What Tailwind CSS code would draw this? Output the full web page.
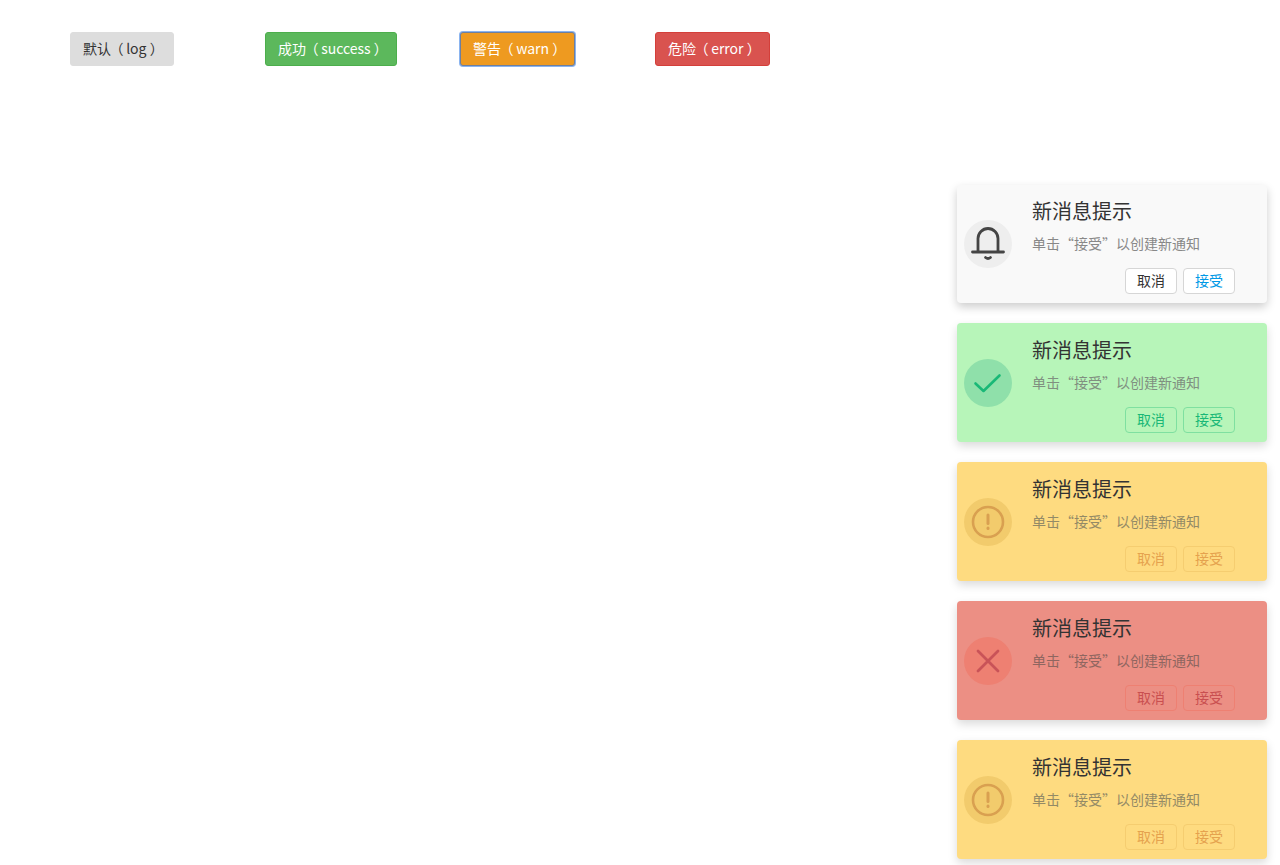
<!DOCTYPE html>
<html lang="zh-CN">
<head>
  <meta charset="UTF-8" />
  <title>Notice</title>
  <script src="https://cdn.jsdelivr.net/npm/@tailwindcss/browser@4"></script>
</head>
<body class="bg-white h-[865px] overflow-hidden relative font-['Noto_Sans_CJK_SC','Noto_Sans',sans-serif]">
  <!-- Trigger buttons -->
  <div class="grid grid-cols-[repeat(4,195px)] justify-start items-start pl-[70px] pt-[32px]">
    <div><button class="h-[34px] w-[104px] pl-[12px] pb-[2px] text-left rounded-[3px] bg-[#dddddd] border border-[#dddddd] text-[14px] text-[#333333] whitespace-nowrap">默认<span class="ml-[5px] [font-feature-settings:'palt']">（</span> log ）</button></div>
    <div><button class="h-[34px] w-[132px] pl-[12px] pb-[2px] text-left rounded-[3px] bg-[#5cb85c] border border-[#4cae4c] text-[14px] text-white whitespace-nowrap">成功<span class="ml-[5px] [font-feature-settings:'palt']">（</span> success ）</button></div>
    <div><button class="h-[34px] w-[115px] pl-[12px] pb-[2px] text-left rounded-[3px] bg-[#ee9a20] border border-[#6d7f9f] ring-1 ring-[#8ab4f0] text-[14px] text-white whitespace-nowrap">警告<span class="ml-[5px] [font-feature-settings:'palt']">（</span> warn ）</button></div>
    <div><button class="h-[34px] w-[115px] pl-[12px] pb-[2px] text-left rounded-[3px] bg-[#d9534f] border border-[#d43f3a] text-[14px] text-white whitespace-nowrap">危险<span class="ml-[5px] [font-feature-settings:'palt']">（</span> error ）</button></div>
  </div>

  <!-- Notices -->
  <div class="absolute top-[185px] left-[957px] w-[310px] flex flex-col gap-[20px]">
    <div class="h-[118px] rounded-[4px] bg-[#f9f9f9] shadow-[0_4px_10px_rgba(0,0,0,0.2)] flex">
      <div class="w-[75px] shrink-0 pl-[7px] pt-[35px]">
        <div class="w-[48px] h-[48px] rounded-full bg-[#eeeeee] flex items-center justify-center">
          <svg width="36" height="36" viewBox="0 0 36 36" fill="none" stroke="#444444" stroke-width="2.8" stroke-linecap="round"><path d="M2.5 26h31M8 26V12.5a10 10 0 0 1 20 0V26"/><path d="M15.5 31.5q2.5 2 5 0"/></svg>
        </div>
      </div>
      <div class="flex-1 pt-[13px]">
        <div class="text-[20px] leading-[26px] text-[#333333]">新消息提示</div>
        <div class="mt-[10px] text-[14px] leading-[18px] text-[#888888]">单击“接受”以创建新通知</div>
        <div class="mt-[16px] flex justify-end gap-[6px] pr-[32px]">
          <button class="w-[52px] h-[26px] pb-[1px] rounded-[4px] bg-white border border-[#d6d6d6] text-[14px] text-[#333333]">取消</button>
          <button class="w-[52px] h-[26px] pb-[1px] rounded-[4px] bg-white border border-[#d6d6d6] text-[14px] text-[#0099e6]">接受</button>
        </div>
      </div>
    </div>

    <div class="h-[119px] rounded-[4px] bg-[#b7f5b9] shadow-[0_4px_10px_rgba(0,0,0,0.15)] flex">
      <div class="w-[75px] shrink-0 pl-[7px] pt-[36px]">
        <div class="w-[48px] h-[48px] rounded-full bg-[#8fe0aa] flex items-center justify-center">
          <svg width="32" height="32" viewBox="0 0 32 32" fill="none" stroke="#19b877" stroke-width="2.6" stroke-linecap="round" stroke-linejoin="round"><path d="M3.5 16.5l8 7.5 16-15.5"/></svg>
        </div>
      </div>
      <div class="flex-1 pt-[14px]">
        <div class="text-[20px] leading-[26px] text-[#333333]">新消息提示</div>
        <div class="mt-[10px] text-[14px] leading-[18px] text-[#808f80]">单击“接受”以创建新通知</div>
        <div class="mt-[16px] flex justify-end gap-[6px] pr-[32px]">
          <button class="w-[52px] h-[26px] pb-[1px] rounded-[4px] bg-[#b7f5b9] border border-[#7fe0a0] text-[14px] text-[#19b877]">取消</button>
          <button class="w-[52px] h-[26px] pb-[1px] rounded-[4px] bg-[#b7f5b9] border border-[#7fe0a0] text-[14px] text-[#19b877]">接受</button>
        </div>
      </div>
    </div>

    <div class="h-[119px] rounded-[4px] bg-[#fedb80] shadow-[0_4px_10px_rgba(0,0,0,0.15)] flex">
      <div class="w-[75px] shrink-0 pl-[7px] pt-[36px]">
        <div class="w-[48px] h-[48px] rounded-full bg-[#f2cb6c] flex items-center justify-center">
          <svg width="34" height="34" viewBox="0 0 34 34" fill="none" stroke="#d9a050" stroke-width="2.6" stroke-linecap="round"><circle cx="17" cy="17" r="15"/><path d="M17 10v8.5" stroke-width="3"/><path d="M17 23v.5" stroke-width="3"/></svg>
        </div>
      </div>
      <div class="flex-1 pt-[14px]">
        <div class="text-[20px] leading-[26px] text-[#333333]">新消息提示</div>
        <div class="mt-[10px] text-[14px] leading-[18px] text-[#938a66]">单击“接受”以创建新通知</div>
        <div class="mt-[16px] flex justify-end gap-[6px] pr-[32px]">
          <button class="w-[52px] h-[26px] pb-[1px] rounded-[4px] bg-[#fedb80] border border-[#f5cd70] text-[14px] text-[#e5a24e]">取消</button>
          <button class="w-[52px] h-[26px] pb-[1px] rounded-[4px] bg-[#fedb80] border border-[#f5cd70] text-[14px] text-[#e5a24e]">接受</button>
        </div>
      </div>
    </div>

    <div class="h-[119px] rounded-[4px] bg-[#ec8f84] shadow-[0_4px_10px_rgba(0,0,0,0.15)] flex">
      <div class="w-[75px] shrink-0 pl-[7px] pt-[36px]">
        <div class="w-[48px] h-[48px] rounded-full bg-[#ee8072] flex items-center justify-center">
          <svg width="28" height="28" viewBox="0 0 28 28" fill="none" stroke="#c95358" stroke-width="2.8" stroke-linecap="round"><path d="M4 4l20 20M24 4L4 24"/></svg>
        </div>
      </div>
      <div class="flex-1 pt-[14px]">
        <div class="text-[20px] leading-[26px] text-[#333333]">新消息提示</div>
        <div class="mt-[10px] text-[14px] leading-[18px] text-[#8f6660]">单击“接受”以创建新通知</div>
        <div class="mt-[16px] flex justify-end gap-[6px] pr-[32px]">
          <button class="w-[52px] h-[26px] pb-[1px] rounded-[4px] bg-[#ec8f84] border border-[#ee8072] text-[14px] text-[#c94f50]">取消</button>
          <button class="w-[52px] h-[26px] pb-[1px] rounded-[4px] bg-[#ec8f84] border border-[#ee8072] text-[14px] text-[#c94f50]">接受</button>
        </div>
      </div>
    </div>

    <div class="h-[119px] rounded-[4px] bg-[#fedb80] shadow-[0_4px_10px_rgba(0,0,0,0.15)] flex">
      <div class="w-[75px] shrink-0 pl-[7px] pt-[36px]">
        <div class="w-[48px] h-[48px] rounded-full bg-[#f2cb6c] flex items-center justify-center">
          <svg width="34" height="34" viewBox="0 0 34 34" fill="none" stroke="#d9a050" stroke-width="2.6" stroke-linecap="round"><circle cx="17" cy="17" r="15"/><path d="M17 10v8.5" stroke-width="3"/><path d="M17 23v.5" stroke-width="3"/></svg>
        </div>
      </div>
      <div class="flex-1 pt-[14px]">
        <div class="text-[20px] leading-[26px] text-[#333333]">新消息提示</div>
        <div class="mt-[10px] text-[14px] leading-[18px] text-[#938a66]">单击“接受”以创建新通知</div>
        <div class="mt-[16px] flex justify-end gap-[6px] pr-[32px]">
          <button class="w-[52px] h-[26px] pb-[1px] rounded-[4px] bg-[#fedb80] border border-[#f5cd70] text-[14px] text-[#e5a24e]">取消</button>
          <button class="w-[52px] h-[26px] pb-[1px] rounded-[4px] bg-[#fedb80] border border-[#f5cd70] text-[14px] text-[#e5a24e]">接受</button>
        </div>
      </div>
    </div>
  </div>
</body>
</html>
